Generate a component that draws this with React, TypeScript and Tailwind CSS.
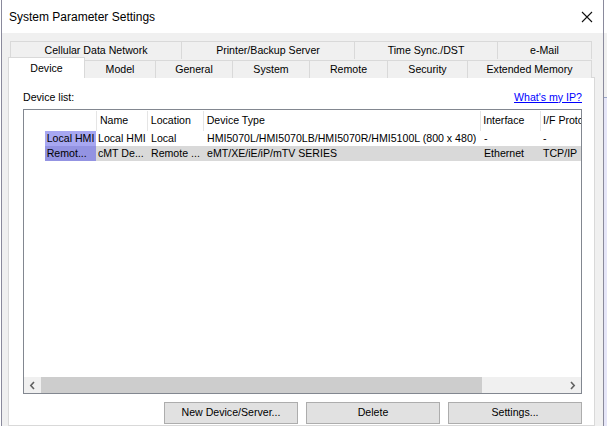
import React from "react";

const font = { fontFamily: '"Liberation Sans", Arial, sans-serif' };

const backTabs = [
  { label: "Cellular Data Network", w: "w-[171px]" },
  { label: "Printer/Backup Server", w: "w-[173px]" },
  { label: "Time Sync./DST", w: "w-[143px]" },
  { label: "e-Mail", w: "w-[95px]" },
];

const frontTabs = [
  { label: "Model", w: "w-[70px]" },
  { label: "General", w: "w-[77px]" },
  { label: "System", w: "w-[77px]" },
  { label: "Remote", w: "w-[78px]" },
  { label: "Security", w: "w-[80px]" },
  { label: "Extended Memory", w: "w-[125px]" },
];

const rows = [
  {
    head: "Local HMI",
    name: "Local HMI",
    loc: "Local",
    type: "HMI5070L/HMI5070LB/HMI5070R/HMI5100L (800 x 480)",
    iface: "-",
    proto: "-",
    selected: false,
  },
  {
    head: "Remot...",
    name: "cMT De...",
    loc: "Remote ...",
    type: "eMT/XE/iE/iP/mTV SERIES",
    iface: "Ethernet",
    proto: "TCP/IP",
    selected: true,
  },
];

function Chevron({ dir }: { dir: "left" | "right" }) {
  return (
    <svg width="7" height="9" viewBox="0 0 7 9" className="text-[#606060]">
      <path
        d={dir === "left" ? "M5 1 L1.8 4.5 L5 8" : "M2 1 L5.2 4.5 L2 8"}
        fill="none"
        stroke="currentColor"
        strokeWidth="1.6"
      />
    </svg>
  );
}

export default function App() {
  return (
    <div
      className="flex h-[426px] w-[607px] overflow-hidden bg-white pl-px text-[10.6px] text-black"
      style={font}
    >
      <div className="flex w-[603px] shrink-0 flex-col border-x border-[#8a8a9c] bg-[#f0f0f0]">
        {/* title bar */}
        <div className="flex h-[33px] shrink-0 items-center justify-between bg-white pl-[7px] pr-[10px]">
          <span className="text-[12px]">System Parameter Settings</span>
          <svg width="12" height="12" viewBox="0 0 12 12">
            <path d="M1 1 L11 11 M11 1 L1 11" stroke="#111" strokeWidth="1.1" />
          </svg>
        </div>

        <div className="flex flex-1 flex-col pl-[6px] pr-[8px] pt-[8px]">
          {/* back tab row */}
          <div className="ml-[2px] flex h-[18px]">
            {backTabs.map((t, i) => (
              <div
                key={t.label}
                className={`${t.w} flex items-center justify-center border-l border-t border-[#d9d9d9] bg-[#f0f0f0] ${
                  i === backTabs.length - 1 ? "border-r" : ""
                }`}
              >
                {t.label}
              </div>
            ))}
          </div>

          {/* front tab row */}
          <div className="relative z-10 -mb-px flex h-[19px] items-end">
            <div className="-mt-[2px] flex h-[21px] w-[77px] items-start justify-center border-x border-t border-[#d9d9d9] bg-white pt-[3px]">
              Device
            </div>
            {frontTabs.map((t, i) => (
              <div
                key={t.label}
                className={`${t.w} flex h-[18px] items-center justify-center border-t border-[#d9d9d9] bg-[#f0f0f0] ${
                  i === 0 ? "" : "border-l"
                } ${i === frontTabs.length - 1 ? "border-r" : ""}`}
              >
                {t.label}
              </div>
            ))}
          </div>

          {/* tab panel */}
          <div className="flex w-[587px] flex-1 flex-col border border-[#d9d9d9] bg-white pl-[14px] pr-[12px] pt-[13px]">
            <div className="flex h-[13px] items-center justify-between">
              <span>Device list:</span>
              <span className="text-[#0000ff] underline">What&apos;s my IP?</span>
            </div>

            {/* list box */}
            <div className="mt-[5px] flex h-[285px] flex-col border border-[#828790] bg-white">
              <div className="flex-1">
                <div className="flex h-[21px] pt-px">
                  <div className="w-[21px]" />
                  <div className="w-[52px] border-r border-[#e5e5e5]" />
                  <div className="flex w-[51px] items-center border-r border-[#e5e5e5] pl-[3px]">Name</div>
                  <div className="flex w-[56px] items-center border-r border-[#e5e5e5] pl-[3px]">Location</div>
                  <div className="flex w-[278px] items-center border-r border-[#e5e5e5] pl-[3px]">Device Type</div>
                  <div className="flex w-[60px] items-center border-r border-[#e5e5e5] pl-[2px]">Interface</div>
                  <div className="flex w-[40px] items-center overflow-hidden whitespace-nowrap pl-[2px]">I/F Protocol</div>
                </div>
                {rows.map((r) => (
                  <div key={r.head} className="flex h-[15px] items-center whitespace-nowrap">
                    <div className="h-full w-[21px]" />
                    <div
                      className={`flex h-full w-[52px] items-center overflow-hidden pl-[2px] ${
                        r.selected ? "bg-[#9393e2]" : "bg-[#a7a7f1]"
                      }`}
                    >
                      {r.head}
                    </div>
                    <div className={`flex h-full flex-1 items-center ${r.selected ? "bg-[#d9d9d9]" : ""}`}>
                      <div className="w-[51px] overflow-hidden pl-[2px]">{r.name}</div>
                      <div className="w-[56px] overflow-hidden pl-[4px]">{r.loc}</div>
                      <div className="w-[278px] overflow-hidden pl-[4px]">{r.type}</div>
                      <div className="w-[60px] overflow-hidden pl-[3px]">{r.iface}</div>
                      <div className="w-[40px] overflow-hidden pl-[2px]">{r.proto}</div>
                    </div>
                  </div>
                ))}
              </div>

              {/* horizontal scrollbar */}
              <div className="flex h-[16px] items-stretch bg-[#f0f0f0]">
                <div className="flex w-[17px] items-center justify-center">
                  <Chevron dir="left" />
                </div>
                <div className="w-[441px] bg-[#cdcdcd]" />
                <div className="flex-1" />
                <div className="flex w-[17px] items-center justify-center">
                  <Chevron dir="right" />
                </div>
              </div>
            </div>

            {/* buttons */}
            <div className="mt-[8px] flex justify-end gap-[8px]">
              {["New Device/Server...", "Delete", "Settings..."].map((b) => (
                <button
                  key={b}
                  className="flex h-[22px] w-[134px] items-center justify-center border border-[#adadad] bg-[#e1e1e1]"
                >
                  {b}
                </button>
              ))}
            </div>
          </div>
        </div>
      </div>

      {/* sliver of the window behind */}
      <div className="flex flex-1 flex-col">
        <div className="h-[33px] bg-white" />
        <div className="h-[64px] bg-[#f0f0f0]" />
        <div className="flex-1 border-t border-[#9aa6c8] bg-[#e6e6f8]" />
      </div>
    </div>
  );
}
